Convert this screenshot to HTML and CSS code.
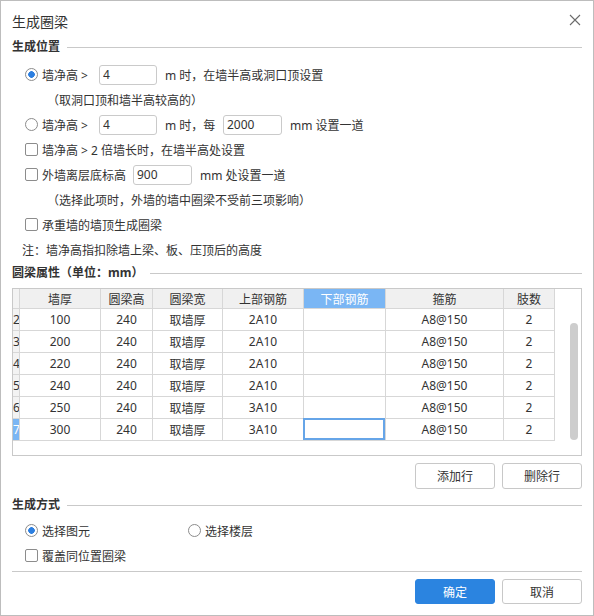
FILE: index.html
```html
<!DOCTYPE html>
<html>
<head>
<meta charset="utf-8">
<link rel="stylesheet" href="styles.css">
</head>
<body>
<div class="dlg">
  <div class="title">
    <span>生成圈梁</span>
    <svg class="close" width="12" height="12" viewBox="0 0 12 12"><path d="M1 1L11 11M11 1L1 11" stroke="#6b6b6b" stroke-width="1.1" fill="none"/></svg>
  </div>

  <div class="sec"><span>生成位置</span></div>
  <div class="opts">
    <div class="row"><span class="radio on"></span><span class="lbl w57">墙净高 &gt;</span><input class="inp w58" value="4"><span class="after">m 时，在墙半高或洞口顶设置</span></div>
    <div class="row note-ind">（取洞口顶和墙半高较高的）</div>
    <div class="row"><span class="radio"></span><span class="lbl w57">墙净高 &gt;</span><input class="inp w58" value="4"><span class="after w58">m 时，每</span><input class="inp w59" value="2000"><span class="after">mm 设置一道</span></div>
    <div class="row"><span class="chk"></span><span class="lbl">墙净高 &gt; 2 倍墙长时，在墙半高处设置</span></div>
    <div class="row"><span class="chk"></span><span class="lbl w91">外墙离层底标高</span><input class="inp w59" value="900"><span class="after">mm 处设置一道</span></div>
    <div class="row note-ind">（选择此项时，外墙的墙中圈梁不受前三项影响）</div>
    <div class="row"><span class="chk"></span><span class="lbl">承重墙的墙顶生成圈梁</span></div>
    <div class="row note">注：墙净高指扣除墙上梁、板、压顶后的高度</div>
  </div>

  <div class="sec sec2"><span>圆梁属性（单位：mm）</span></div>
  <div class="tbl">
    <div class="tr th">
      <div class="c rn"></div><div class="c">墙厚</div><div class="c">圆梁高</div><div class="c">圆梁宽</div><div class="c">上部钢筋</div><div class="c hl">下部钢筋</div><div class="c">箍筋</div><div class="c">肢数</div>
    </div>
    <div class="tr"><div class="c rn">2</div><div class="c">100</div><div class="c">240</div><div class="c">取墙厚</div><div class="c">2A10</div><div class="c"></div><div class="c">A8@150</div><div class="c">2</div></div>
    <div class="tr"><div class="c rn">3</div><div class="c">200</div><div class="c">240</div><div class="c">取墙厚</div><div class="c">2A10</div><div class="c"></div><div class="c">A8@150</div><div class="c">2</div></div>
    <div class="tr"><div class="c rn">4</div><div class="c">220</div><div class="c">240</div><div class="c">取墙厚</div><div class="c">2A10</div><div class="c"></div><div class="c">A8@150</div><div class="c">2</div></div>
    <div class="tr"><div class="c rn">5</div><div class="c">240</div><div class="c">240</div><div class="c">取墙厚</div><div class="c">2A10</div><div class="c"></div><div class="c">A8@150</div><div class="c">2</div></div>
    <div class="tr"><div class="c rn">6</div><div class="c">250</div><div class="c">240</div><div class="c">取墙厚</div><div class="c">3A10</div><div class="c"></div><div class="c">A8@150</div><div class="c">2</div></div>
    <div class="tr"><div class="c rn rsel">7</div><div class="c">300</div><div class="c">240</div><div class="c">取墙厚</div><div class="c">3A10</div><div class="c sel"></div><div class="c">A8@150</div><div class="c">2</div></div>
    <div class="sb"></div>
  </div>

  <div class="btns">
    <div class="btn">添加行</div>
    <div class="btn">删除行</div>
  </div>

  <div class="sec sec3"><span>生成方式</span></div>
  <div class="row mode"><span class="radio on"></span><span class="lbl w146">选择图元</span><span class="radio r2"></span><span class="lbl">选择楼层</span></div>
  <div class="row"><span class="chk"></span><span class="lbl">覆盖同位置圈梁</span></div>

  <div class="hr"></div>
  <div class="btns foot">
    <div class="btn primary">确定</div>
    <div class="btn">取消</div>
  </div>
</div>
</body>
</html>
```

FILE: styles.css
```css
* { box-sizing: border-box; }
html, body { margin: 0; padding: 0; background: #fff; }
body {
  font-family: "Noto Sans", "Noto Sans CJK SC", sans-serif;
  font-size: 12px;
  color: #333;
}
.dlg {
  width: 594px;
  height: 616px;
  border: 1px solid #bdbdbd;
  background: #fff;
  padding: 0 11px;
}
.title {
  height: 38px;
  padding-top: 2px;
  display: flex;
  align-items: center;
  justify-content: space-between;
  font-size: 14px;
  color: #333;
}
.close { margin-right: 1px; margin-bottom: 3px; }

.sec {
  height: 16px;
  line-height: 16px;
  display: flex;
  align-items: center;
  font-weight: bold;
  color: #333;
}
.sec::after {
  content: "";
  flex: 1;
  height: 1px;
  background: #c9c9c9;
  margin-left: 7px;
}
.sec2 { margin-top: 3px; }
.sec3 { margin-top: 8px; }

.opts { margin-top: 7px; }
.row {
  display: flex;
  align-items: center;
  height: 25px;
  white-space: nowrap;
}
.radio {
  flex: none;
  width: 13px;
  height: 13px;
  border: 1px solid #8c8c8c;
  border-radius: 50%;
  margin-left: 13px;
  margin-right: 4px;
  background: #fff;
}
.radio.on {
  background: radial-gradient(circle, #2d7fe0 0, #2d7fe0 3px, #fff 3.6px);
}
.radio.r2 { margin-left: 0; }
.chk {
  flex: none;
  width: 13px;
  height: 13px;
  border: 1px solid #8c8c8c;
  border-radius: 2px;
  margin-left: 13px;
  margin-right: 4px;
  background: #fff;
}
.lbl { flex: none; }
.w57 { width: 57px; }
.w58 { width: 58px; }
.w59 { width: 59px; }
.w91 { width: 91px; }
.w146 { width: 146px; }
.after { margin-left: 8px; flex: none; }
.inp {
  flex: none;
  height: 20px;
  border: 1px solid #cacaca;
  border-radius: 3px;
  padding: 0 3px;
  font: inherit;
  color: #333;
  background: #fff;
  outline: none;
}
.note-ind { padding-left: 35px; }
.note { padding-left: 10px; }

.tbl {
  margin-top: 7px;
  height: 168px;
  border: 1px solid #c9c9c9;
  position: relative;
}
.tr {
  display: grid;
  grid-template-columns: 7px 81px 52px 70px 81px 82px 118px 51px;
  height: 22px;
}
.tr.th { height: 20px; }
.c {
  border-right: 1px solid #d7d7d7;
  border-bottom: 1px solid #d7d7d7;
  display: flex;
  align-items: center;
  justify-content: center;
  overflow: hidden;
  white-space: nowrap;
}
.th .c { background: #f0f0f0; }
.th .c.hl { background: #7ab6f4; color: #fff; }
.c.rn {
  justify-content: flex-start;
  background: #f3f3f3;
  padding-left: 0;
}
.c.rsel { background: #7ab6f4; color: #fff; }
.c.sel { position: relative; overflow: visible; }
.c.sel::after {
  content: "";
  position: absolute;
  left: -1px;
  top: -1px;
  right: 0;
  bottom: 0;
  border: 2px solid #66a5e8;
}
.sb {
  position: absolute;
  left: 557px;
  top: 34px;
  width: 8px;
  height: 117px;
  border-radius: 4px;
  background: #cdcdcd;
}

.btns {
  display: flex;
  justify-content: flex-end;
  gap: 7px;
  margin-top: 7px;
}
.btn {
  width: 80px;
  height: 26px;
  border: 1px solid #c8c8c8;
  border-radius: 3px;
  background: #fff;
  display: flex;
  align-items: center;
  justify-content: center;
  color: #333;
}
.mode { margin-top: 5px; }
.hr {
  margin-top: 3px;
  height: 1px;
  background: #c9c9c9;
}
.foot .btn { height: 25px; }
.btn.primary {
  background: #2b84e0;
  border-color: #2b84e0;
  color: #fff;
}
```
